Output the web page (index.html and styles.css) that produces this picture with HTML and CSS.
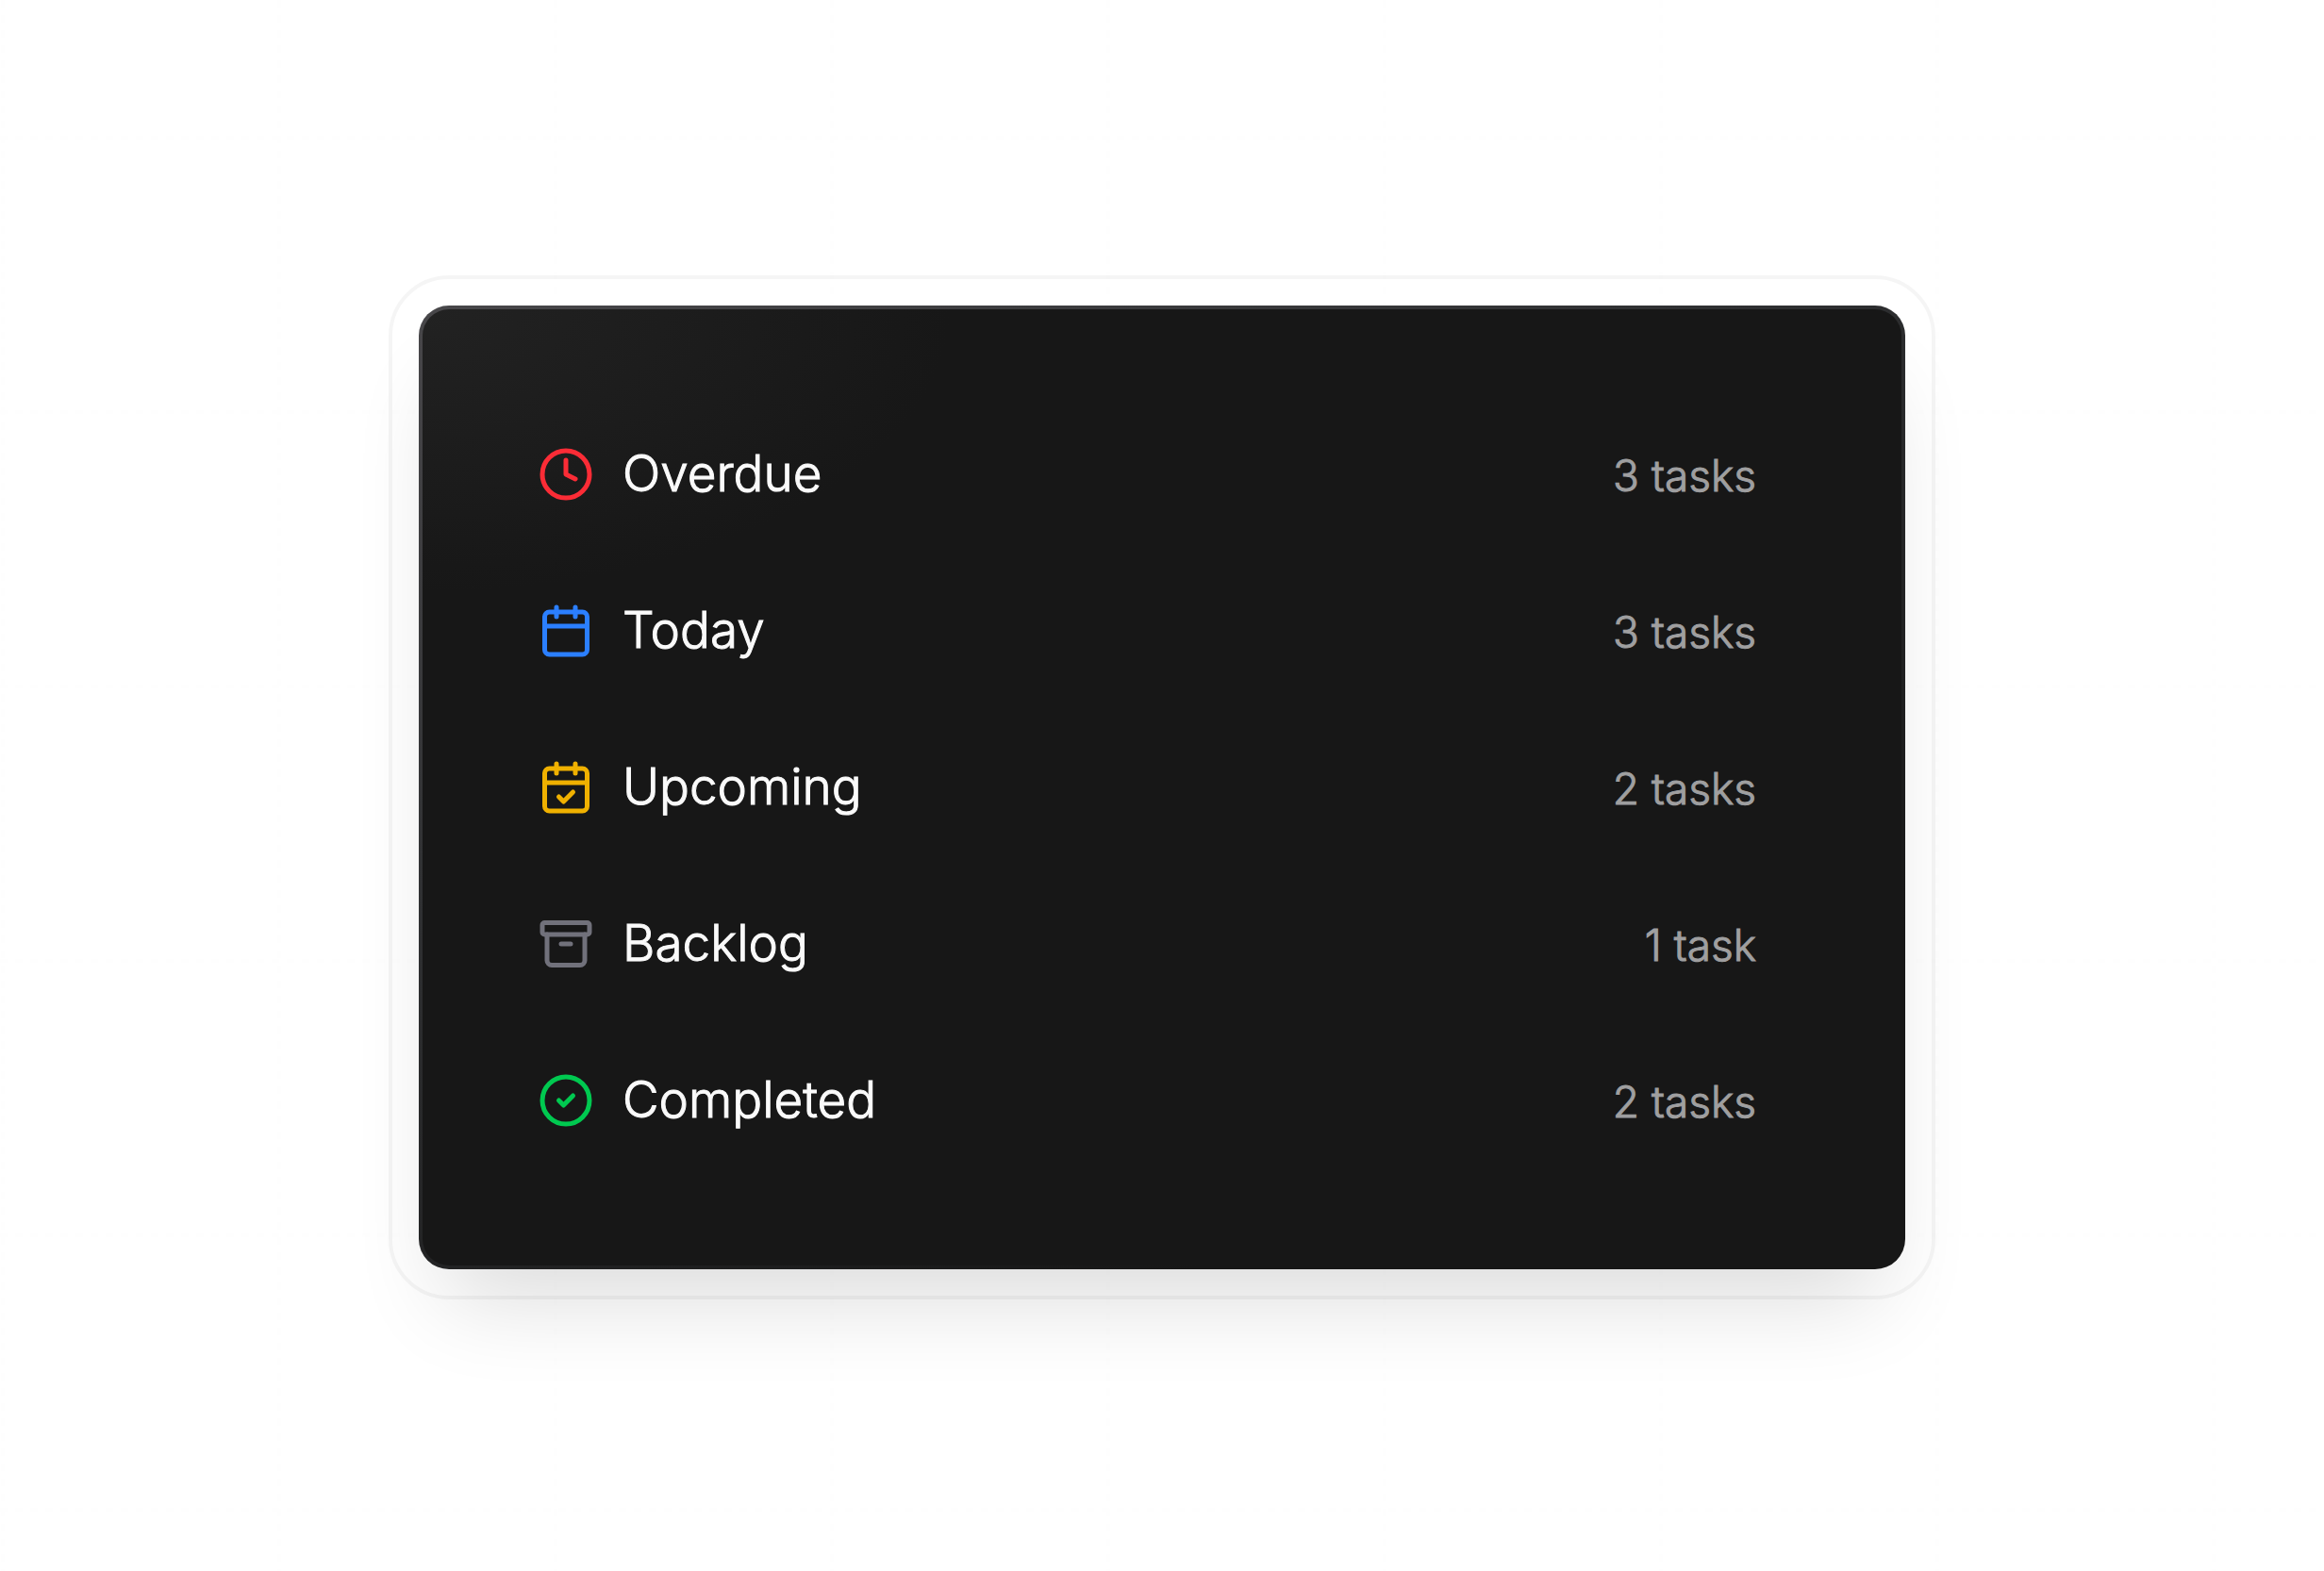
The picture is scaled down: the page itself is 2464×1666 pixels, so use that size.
FILE: index.html
```html
<!DOCTYPE html>
<html lang="en">
<head>
<meta charset="utf-8">
<meta name="viewport" content="width=device-width, initial-scale=1">
<title>Tasks</title>
<link rel="stylesheet" href="styles.css">
</head>
<body>
<main class="page">
  <div class="frame">
    <section class="card">
      <ul class="list">
        <li class="row">
          <svg class="icon icon-overdue" viewBox="0 0 24 24" aria-hidden="true"><circle cx="12" cy="12" r="10"/><path d="M12 6v6l4 2"/></svg>
          <div class="label"><span class="name">Overdue</span><span class="count">3 tasks</span></div>
        </li>
        <li class="row">
          <svg class="icon icon-today" viewBox="0 0 24 24" aria-hidden="true"><path d="M8 2v4M16 2v4M3 10h18"/><rect x="3" y="4" width="18" height="18" rx="2"/></svg>
          <div class="label"><span class="name">Today</span><span class="count">3 tasks</span></div>
        </li>
        <li class="row">
          <svg class="icon icon-upcoming" viewBox="0 0 24 24" aria-hidden="true"><path d="M8 2v4M16 2v4M3 10h18"/><rect x="3" y="4" width="18" height="18" rx="2"/><path d="m9 16 2 2 4-4"/></svg>
          <div class="label"><span class="name">Upcoming</span><span class="count">2 tasks</span></div>
        </li>
        <li class="row">
          <svg class="icon icon-backlog" viewBox="0 0 24 24" aria-hidden="true"><rect x="2" y="3" width="20" height="5" rx="1"/><path d="M4 8v11a2 2 0 0 0 2 2h12a2 2 0 0 0 2-2V8M10 12h4"/></svg>
          <div class="label"><span class="name">Backlog</span><span class="count">1 task</span></div>
        </li>
        <li class="row">
          <svg class="icon icon-completed" viewBox="0 0 24 24" aria-hidden="true"><circle cx="12" cy="12" r="10"/><path d="m9 12 2 2 4-4"/></svg>
          <div class="label"><span class="name">Completed</span><span class="count">2 tasks</span></div>
        </li>
      </ul>
    </section>
  </div>
</main>
</body>
</html>
```

FILE: styles.css
```css
* {
  box-sizing: border-box;
}

body {
  margin: 0;
  background: #fff;
  font-family: Inter, "Liberation Sans", sans-serif;
  font-weight: 300;
}

/* faint dashed grid behind the card */
.page {
  min-height: 100vh;
  padding: 292px 412px;
  background:
    conic-gradient(from 270deg at 4px 8px, #fefefe 90deg, transparent 0) 1px 0 / 293px 16px,
    conic-gradient(from 270deg at 8px 4px, #fefefe 90deg, transparent 0) 0 144px / 16px 291px;
}

.frame {
  padding: 28px;
  border: 4px solid rgba(0, 0, 0, 0.04);
  border-radius: 64px;
}

.card {
  padding: 92px 154px 92px 122px;
  border: 4px solid transparent;
  border-radius: 32px;
  background:
    radial-gradient(ellipse 560px 300px at 0 0, #222 0%, #171717 100%) padding-box,
    linear-gradient(155deg, #48474a 0%, #303133 35%, #171717 80%) border-box;
  box-shadow: 0 60px 96px -28px rgba(0, 0, 0, 0.14);
}

.list {
  margin: 0;
  padding: 0;
  list-style: none;
}

.row {
  display: flex;
  align-items: center;
  gap: 30px;
  height: 166px;
}

.icon {
  flex: none;
  width: 60px;
  height: 60px;
  fill: none;
  stroke: currentColor;
  stroke-width: 2;
  stroke-linecap: round;
  stroke-linejoin: round;
}

.icon-overdue { color: #fb2c36; }
.icon-today { color: #2b7fff; }
.icon-upcoming { color: #f0b100; }
.icon-backlog { color: #71717b; }
.icon-completed { color: #00c950; }

/* the thin stroke gives a weight between light and regular */
.label {
  display: flex;
  flex: 1;
  align-items: baseline;
  justify-content: space-between;
  padding-bottom: 2px;
  -webkit-text-stroke: 1px currentColor;
}

.name {
  color: #fafafa;
  font-size: 53px;
}

.count {
  color: #9f9fa0;
  font-size: 46px;
}
```
